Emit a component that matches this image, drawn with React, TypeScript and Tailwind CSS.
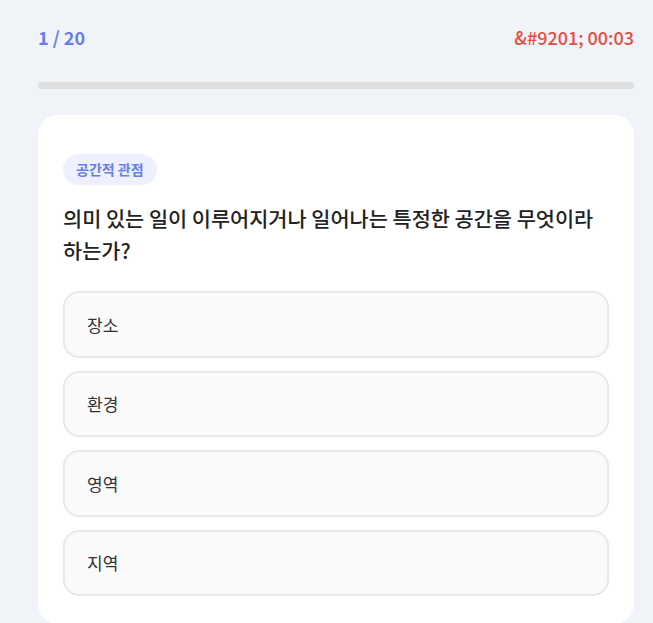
import React from "react";

const options = ["장소", "환경", "영역", "지역"];

export default function App() {
  return (
    <div
      className="w-[653px] h-[623px] overflow-hidden bg-[#f0f3f8]"
      style={{ fontFamily: '"Noto Sans CJK KR", "Noto Sans", sans-serif' }}
    >
      <div className="ml-[38px] w-[596px] pt-[25px]">
        <div className="flex items-center justify-between h-[24px]">
          <span className="text-[18px] font-bold text-[#667eea] leading-[24px]">1 / 20</span>
          <span className="text-[18px] font-medium text-[#e74c3c] leading-[24px]">&amp;#9201; 00:03</span>
        </div>
        <div className="mt-[33px] h-[7px] rounded-full bg-[#e0e0e0]" />
        <div className="mt-[26px] bg-white rounded-[20px] px-[25px] pt-[39px] pb-[28px]">
          <div className="inline-flex items-center h-[31px] px-[13px] rounded-full bg-[#eef0ff] text-[14px] font-bold text-[#667eea]">
            공간적 관점
          </div>
          <div className="mt-[17px] text-[20.8px] leading-[32px] font-medium text-[#222] break-keep">
            의미 있는 일이 이루어지거나 일어나는 특정한 공간을 무엇이라 하는가?
          </div>
          <div className="mt-[25px] flex flex-col gap-[13px]">
            {options.map((o) => (
              <div
                key={o}
                className="h-[66.5px] flex items-center px-[22px] border-2 border-[#e8e8e8] bg-[#fafafa] rounded-[16px] text-[17px] text-[#333]"
              >
                {o}
              </div>
            ))}
          </div>
        </div>
      </div>
    </div>
  );
}
